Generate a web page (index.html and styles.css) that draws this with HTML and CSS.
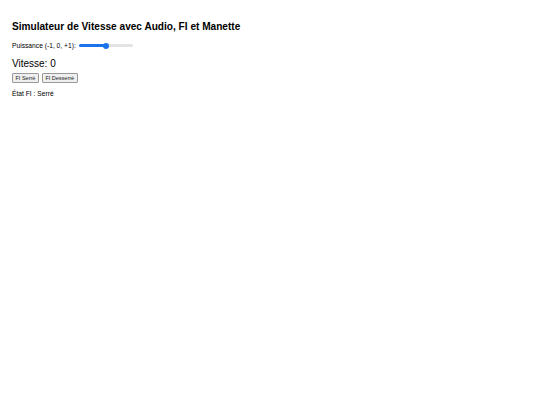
FILE: index.html
```html
<!DOCTYPE html>
<html lang="fr">
<head>
<meta charset="UTF-8">
<meta name="viewport" content="width=device-width, initial-scale=1.0">
<title>Simulateur de Vitesse</title>
<link rel="stylesheet" href="styles.css">
</head>
<body>
<div id="app">
    <h2 class="title">Simulateur de Vitesse avec Audio, FI et Manette</h2>
    <div class="row">
        <label for="puissance">Puissance (-1, 0, +1):</label>
        <input type="range" id="puissance" class="slider" min="-1" max="1" step="1" value="0">
    </div>
    <div class="vitesse">Vitesse: <span id="vitesse">0</span></div>
    <div class="btns">
        <button class="btn">FI Serré</button>
        <button class="btn">FI Desserré</button>
    </div>
    <p class="etat">État FI : <span id="etat">Serré</span></p>
</div>
</body>
</html>
```

FILE: styles.css
```css
body {
    margin: 0;
    font-family: "Liberation Sans", Arial, sans-serif;
    font-size: 6.7px;
    color: #000;
    background: #fff;
}
#app {
    padding: 12px;
}
.title {
    margin: 9px 0 9px;
    font-size: 10.1px;
    font-weight: bold;
}
.row {
    display: flex;
    align-items: center;
    gap: 3px;
    height: 9px;
}
.slider {
    -webkit-appearance: none;
    appearance: none;
    margin: 0;
    width: 54px;
    height: 3px;
    border-radius: 2px;
    background: linear-gradient(to right, #1a73e8 0, #1a73e8 50%, #e3e3e3 50%, #e3e3e3 100%);
}
.slider::-webkit-slider-thumb {
    -webkit-appearance: none;
    width: 6px;
    height: 6px;
    border-radius: 50%;
    background: #1a73e8;
}
.vitesse {
    margin: 8px 0 4px;
    font-size: 10px;
}
.btns {
    display: flex;
    gap: 3px;
}
.btn {
    margin: 0;
    padding: 1px 2.5px;
    font: 5.5px "Liberation Sans", Arial, sans-serif;
    color: #222;
    background: #efefef;
    border: 1px solid #999;
    border-radius: 1px;
}
.etat {
    margin: 7px 0;
}
```
